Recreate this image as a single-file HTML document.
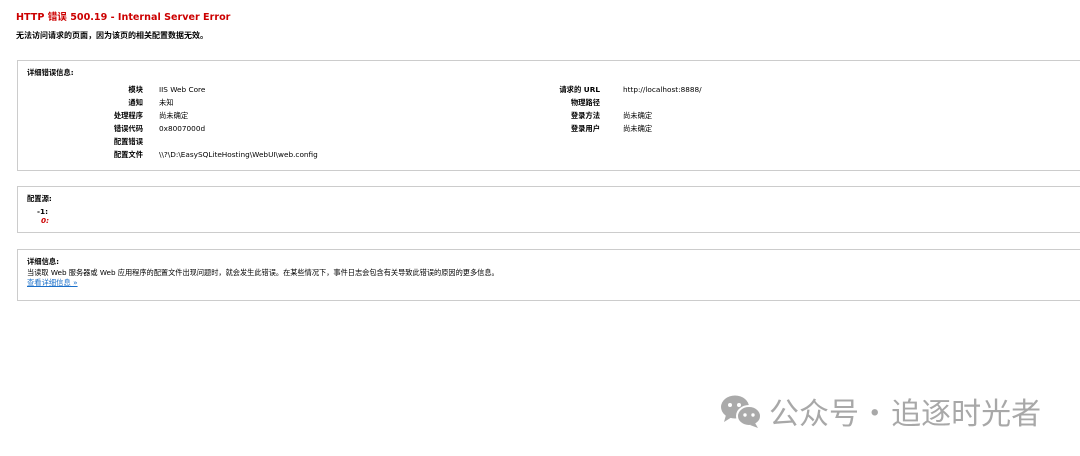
<!DOCTYPE html>
<html><head><meta charset="utf-8"><style>
*{margin:0;padding:0;box-sizing:border-box}
body{width:1080px;height:456px;background:#fff;position:relative;overflow:hidden;font-family:"DejaVu Sans","Noto Sans CJK SC",sans-serif;color:#000;font-size:7.3px}
.a{position:absolute;white-space:nowrap;line-height:10px}
h1{position:absolute;left:16px;top:11px;font-size:9.6px;color:#cc0000;font-weight:bold;white-space:nowrap;line-height:13px}
.box{position:absolute;left:17px;width:1080px;border:1px solid #ccc;background:#fff}
.b{font-weight:bold}
.r{text-align:right;width:100px}
</style></head><body>
<h1>HTTP 错误 500.19 - Internal Server Error</h1>
<div class="a b" style="left:16px;top:31px;font-size:8px">无法访问请求的页面，因为该页的相关配置数据无效。</div>
<div class="box" style="top:60px;height:111px"></div>
<div class="a b" style="left:27px;top:68px">详细错误信息:</div>
<div class="a b r" style="left:43px;top:85px">模块</div><div class="a" style="left:159px;top:85px">IIS Web Core</div>
<div class="a b r" style="left:43px;top:98px">通知</div><div class="a" style="left:159px;top:98px">未知</div>
<div class="a b r" style="left:43px;top:111px">处理程序</div><div class="a" style="left:159px;top:111px">尚未确定</div>
<div class="a b r" style="left:43px;top:124px">错误代码</div><div class="a" style="left:159px;top:124px">0x8007000d</div>
<div class="a b r" style="left:43px;top:137px">配置错误</div>
<div class="a b r" style="left:43px;top:150px">配置文件</div><div class="a" style="left:159px;top:150px">\\?\D:\EasySQLiteHosting\WebUI\web.config</div>
<div class="a b r" style="left:500px;top:85px">请求的 URL</div><div class="a" style="left:623px;top:85px">http://localhost:8888/</div>
<div class="a b r" style="left:500px;top:98px">物理路径</div>
<div class="a b r" style="left:500px;top:111px">登录方法</div><div class="a" style="left:623px;top:111px">尚未确定</div>
<div class="a b r" style="left:500px;top:124px">登录用户</div><div class="a" style="left:623px;top:124px">尚未确定</div>
<div class="box" style="top:186px;height:47px"></div>
<div class="a b" style="left:27px;top:194px">配置源:</div>
<div class="a b" style="left:37px;top:207px">-1:</div>
<div class="a b" style="left:41px;top:216px;color:#c00;font-style:italic">0:</div>
<div class="box" style="top:249px;height:52px"></div>
<div class="a b" style="left:27px;top:257px">详细信息:</div>
<div class="a" style="left:27px;top:268px;font-size:7.2px">当读取 Web 服务器或 Web 应用程序的配置文件出现问题时，就会发生此错误。在某些情况下，事件日志会包含有关导致此错误的原因的更多信息。</div>
<div class="a" style="left:27px;top:278px;color:#1a6fc9;text-decoration:underline">查看详细信息 »</div>
<svg style="position:absolute;left:720px;top:394px" width="42" height="34" viewBox="0 0 42 34">
<ellipse cx="15" cy="13" rx="14" ry="11.5" fill="#aaa"/>
<path d="M6 21 L4 28 L12 23Z" fill="#aaa"/>
<ellipse cx="29" cy="22" rx="12" ry="10" fill="#aaa" stroke="#fff" stroke-width="2"/>
<path d="M35 29 L38 34 L30 31Z" fill="#aaa"/>
<circle cx="10" cy="11" r="2" fill="#fff"/><circle cx="19" cy="11" r="2" fill="#fff"/>
<circle cx="25" cy="21" r="1.7" fill="#fff"/><circle cx="33" cy="21" r="1.7" fill="#fff"/>
</svg>
<div class="a" style="left:769px;top:394px;font-size:30px;line-height:34px;color:#a8a8a8;font-family:'Noto Sans CJK SC',sans-serif">公众号<span style="letter-spacing:-6px"> · </span>&nbsp;追逐时光者</div>
</body></html>
